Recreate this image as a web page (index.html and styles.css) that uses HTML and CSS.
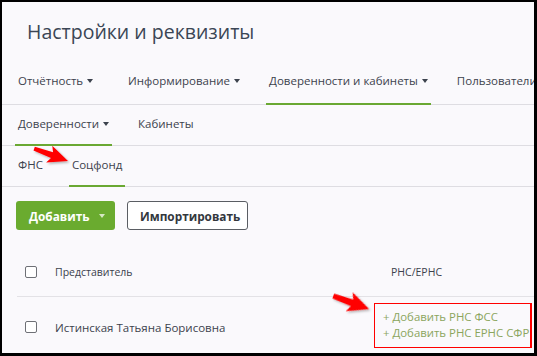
FILE: index.html
```html
<!DOCTYPE html>
<html lang="ru">
<head>
  <meta charset="UTF-8" />
  <title>Настройки и реквизиты</title>
  <meta name="viewport" content="width=device-width, initial-scale=1.0" />
  <link rel="stylesheet" href="styles.css">
</head>
<body>
  <div class="screen">
    <h1 class="title">Настройки и реквизиты</h1>

    <nav class="tabs tabs-main">
      <a class="tab tab-first">Отчётность<span class="caret"></span></a>
      <a class="tab">Информирование<span class="caret"></span></a>
      <a class="tab active">Доверенности и кабинеты<span class="caret"></span></a>
      <a class="tab">Пользователи</a>
    </nav>

    <nav class="tabs">
      <a class="tab active">Доверенности<span class="caret"></span></a>
      <a class="tab">Кабинеты</a>
    </nav>

    <nav class="tabs tabs-third">
      <a class="tab">ФНС</a>
      <a class="tab active">Соцфонд</a>
    </nav>

    <div class="actions">
      <button class="btn btn-green">Добавить<span class="caret caret-light"></span></button>
      <button class="btn btn-outline">Импортировать</button>
    </div>

    <div class="table">
      <div class="row row-head">
        <span class="check"></span>
        <span class="cell-name">Представитель</span>
        <span class="cell-rns">РНС/ЕРНС</span>
      </div>
      <div class="row">
        <span class="check"></span>
        <span class="cell-name name">Истинская Татьяна Борисовна</span>
        <div class="cell-links">
          <a class="add-link">+ Добавить РНС ФСС</a>
          <a class="add-link">+ Добавить РНС ЕРНС СФР</a>
        </div>
      </div>
    </div>

    <!-- red pointers drawn over the screenshot -->
    <svg class="arrows" width="532" height="351" viewBox="2 2 532 351">
      <defs>
        <filter id="shade" x="-50%" y="-50%" width="200%" height="200%">
          <feDropShadow dx="1.5" dy="1.5" stdDeviation="1" flood-color="#000" flood-opacity="0.3" />
        </filter>
      </defs>
      <g fill="#f00" filter="url(#shade)">
        <polygon transform="translate(68 161) rotate(20)" points="-36,-2 -17,-3 -20,-9 0,0 -20,9 -17,3 -36,2" />
        <polygon transform="translate(369 309) rotate(20)" points="-38,-2.5 -18,-3.5 -21,-10 0,0 -21,10 -18,3.5 -38,2.5" />
      </g>
    </svg>
  </div>
</body>
</html>
```

FILE: styles.css
```css
* {
  box-sizing: border-box;
}

body {
  margin: 0;
  background-color: #000;
  font-family: 'Open Sans', 'Noto Sans', sans-serif;
  color: #3c424d;
}

.screen {
  position: relative;
  width: 532px;
  height: 351px;
  margin: 2px 0 0 2px;
  background-color: #faf9fc;
  overflow: hidden;
}

.title {
  margin: 15px 0 0 25px;
  font-size: 19.5px;
  line-height: 30px;
  font-weight: 400;
  color: #3b4655;
}

.tabs {
  display: flex;
  gap: 23px;
  padding-left: 13px;
  border-bottom: 1px solid #dedde2;
  white-space: nowrap;
}

.tabs-main {
  margin-top: 25px;
}

.tab {
  display: flex;
  align-items: center;
  padding: 10px 3px 11px;
  margin-bottom: -1px;
  font-size: 11.5px;
  line-height: 18px;
  border-bottom: 2px solid transparent;
}

.tabs-main .tab {
  padding-top: 0;
  padding-bottom: 13px;
}

.tab-first {
  margin-right: 6px;
}

.tab.active {
  border-bottom-color: #6aa832;
}

.caret {
  display: inline-block;
  margin-left: 4px;
  border-left: 3px solid transparent;
  border-right: 3px solid transparent;
  border-top: 4px solid #3c424d;
}

.caret-light {
  margin-left: 10px;
  border-top-color: #d6e8c4;
}

.actions {
  display: flex;
  gap: 12px;
  margin: 14px 0 0 14px;
}

.btn {
  display: flex;
  align-items: center;
  height: 29px;
  padding: 0 12px;
  font-family: inherit;
  font-size: 11.8px;
  font-weight: 700;
  border-radius: 3px;
}

.btn-green {
  width: 99px;
  padding-left: 13px;
  background-color: #6aab2f;
  border: none;
  color: #fff;
}

.btn-outline {
  width: 121px;
  background-color: #fff;
  border: 1px solid #5a5d63;
  color: #33373d;
}

.table {
  margin: 18px 0 0 15px;
}

.row {
  display: grid;
  grid-template-columns: 38px 319px 1fr;
  align-items: center;
  height: 57px;
}

.row-head {
  height: 49px;
  border-bottom: 1px solid #e3e2e6;
  font-size: 10.5px;
}

.check {
  width: 12px;
  height: 12px;
  margin-left: 8px;
  border: 1.5px solid #6e7076;
  border-radius: 2px;
  background-color: #fff;
}

.row .check {
  margin-top: 3px;
}

.row-head .check {
  margin-top: 0;
}

.cell-rns {
  padding-left: 17px;
}

.name {
  font-size: 11.5px;
  margin-top: 3px;
}

.cell-links {
  display: flex;
  flex-direction: column;
  height: 45px;
  padding: 5px 0 0 8px;
  border: 1.5px solid #f00;
  border-right-width: 2px;
  margin-right: 2px;
}

.add-link {
  font-size: 11.4px;
  line-height: 16px;
  color: #8ba55e;
  white-space: nowrap;
}

.arrows {
  position: absolute;
  left: 0;
  top: 0;
  pointer-events: none;
}
```
